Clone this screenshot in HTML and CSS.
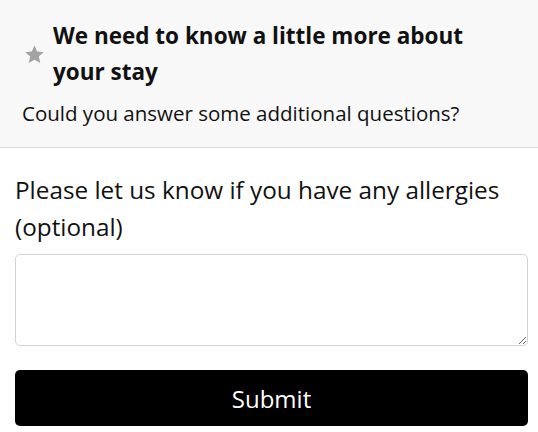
FILE: index.html
```html
<!DOCTYPE html>
<html lang="en">
<head>
<meta charset="utf-8">
<title>Additional questions</title>
<link rel="stylesheet" href="styles.css">
</head>
<body>
<header class="intro">
  <div class="title-row">
    <svg class="star" viewBox="0 0 24 24" width="21" height="21" aria-hidden="true"><path d="M12 1.8l3.1 6.9 7.4.7-5.6 5 1.7 7.4L12 18l-6.6 3.8 1.7-7.4-5.6-5 7.4-.7z" fill="#a3a3a3"/></svg>
    <h1 class="title">We need to know a little more about your stay</h1>
  </div>
  <p class="subtitle">Could you answer some additional questions?</p>
</header>
<form class="form">
  <label class="label" for="allergies">Please let us know if you have any allergies (optional)</label>
  <textarea id="allergies" class="field"></textarea>
  <button type="button" class="submit">Submit</button>
</form>
</body>
</html>
```
FILE: styles.css
```css
* { box-sizing: border-box; }
body {
  margin: 0;
  font-family: "Open Sans", Lato, sans-serif;
  color: #111;
  background: #fff;
}
.intro {
  background: #f8f8f8;
  border-bottom: 1px solid #dcdcdc;
  padding: 18px 22px 0 22px;
  height: 148px;
}
.title-row {
  display: flex;
  align-items: center;
  gap: 8px;
  padding-left: 2px;
}
.star { flex: none; }
.title {
  margin: 0;
  font-size: 22.5px;
  font-weight: 700;
  line-height: 36px;
  max-width: 430px;
}
.subtitle {
  margin: 9px 0 0 0;
  font-size: 20.5px;
  line-height: 28px;
}
.form {
  padding: 23px 10px 0 15px;
  display: flex;
  flex-direction: column;
}
.label {
  font-size: 24.3px;
  line-height: 37px;
}
.field {
  margin-top: 9px;
  height: 92px;
  border: 1px solid #cfd3d8;
  border-radius: 5px;
  resize: vertical;
  font: inherit;
}
.submit {
  margin-top: 24px;
  height: 56px;
  background: #000;
  color: #fff;
  border: none;
  border-radius: 5px;
  font-family: "Open Sans", sans-serif;
  font-size: 24px;
}
```
